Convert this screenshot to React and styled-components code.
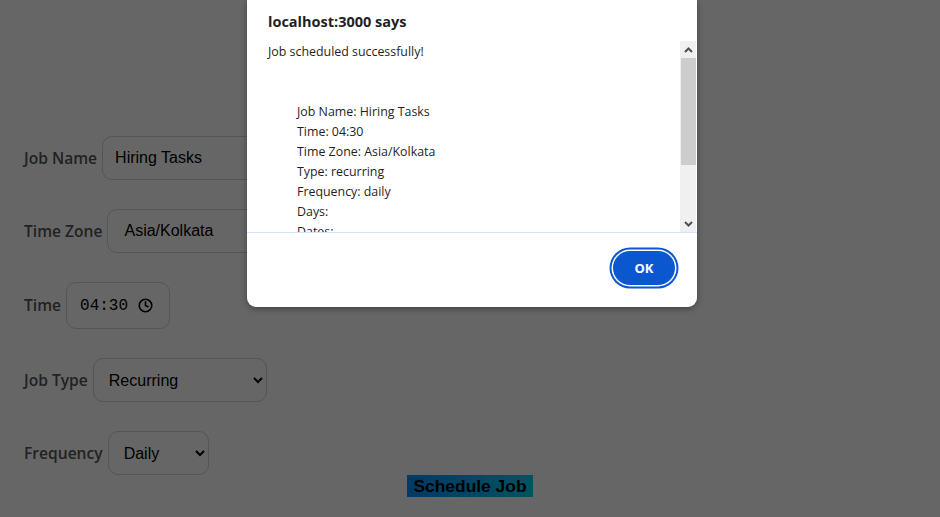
import React from "react";
import styled, { createGlobalStyle } from "styled-components";
import { Clock } from "lucide-react";

const GlobalStyle = createGlobalStyle`
  html, body {
    margin: 0;
    padding: 0;
    background: #fff;
    font-family: "Liberation Sans", Arial, sans-serif;
  }
`;

const Page = styled.div`
  min-height: 517px;
  position: relative;
  overflow: hidden;
`;

const Form = styled.form`
  display: flex;
  flex-direction: column;
  gap: 29px;
  padding: 136px 0 0 24px;
`;

const Row = styled.div`
  display: flex;
  align-items: center;
  gap: 5px;
`;

const Label = styled.label`
  font-family: "Open Sans", sans-serif;
  font-weight: 600;
  font-size: 15.6px;
  color: #555;
  margin-top: -1px;
`;

const TextInput = styled.input`
  box-sizing: border-box;
  width: 300px;
  height: 44px;
  padding: 0 ${(p) => p.$pad}px;
  border: 1px solid #d4d4d4;
  border-radius: 10px;
  font-family: "Liberation Sans", Arial, sans-serif;
  font-size: 16px;
  color: #000;
  background: #fff;
  outline: none;
`;

const TimeBox = styled.div`
  box-sizing: border-box;
  width: 104px;
  height: 47px;
  display: flex;
  align-items: center;
  gap: 10px;
  padding-left: 13px;
  border: 1px solid #d4d4d4;
  border-radius: 10px;
  font-family: "Liberation Mono", monospace;
  font-size: 16px;
  color: #000;
`;

const Select = styled.select`
  box-sizing: border-box;
  width: ${(p) => p.$w}px;
  height: 44px;
  padding: 0 4px 0 11px;
  border: 1px solid #d4d4d4;
  border-radius: 10px;
  font-family: "Liberation Sans", Arial, sans-serif;
  font-size: 16px;
  color: #000;
  background: #fff;
`;

const SubmitRow = styled.div`
  display: flex;
  justify-content: center;
  margin: -29px 0 0 -24px;
`;

const SubmitButton = styled.button`
  height: 22px;
  padding: 0 6px;
  border: none;
  background: linear-gradient(to right, #0090ff, #00d0f0);
  font-family: "Liberation Sans", Arial, sans-serif;
  font-weight: 700;
  font-size: 17.4px;
  color: #000;
`;

const Overlay = styled.div`
  position: absolute;
  inset: 0;
  background: rgba(0, 0, 0, 0.6);
`;

const Dialog = styled.div`
  position: absolute;
  top: 0;
  left: 247px;
  width: 450px;
  height: 307px;
  background: #fff;
  border-radius: 0 0 9px 9px;
  box-shadow: 0 2px 6px rgba(0, 0, 0, 0.35);
  display: flex;
  flex-direction: column;
  font-family: "Open Sans", "Noto Sans", sans-serif;
  color: #1f1f1f;
`;

const Title = styled.div`
  padding: 12px 0 0 21px;
  height: 29px;
  font-size: 14.5px;
  font-weight: 700;
`;

const MessageArea = styled.div`
  display: flex;
  height: 191px;
  border-bottom: 1px solid #d3e3fd;
`;

const MessageText = styled.div`
  flex: 1;
  overflow: hidden;
  padding: 1px 0 0 21px;
  font-size: 12.4px;
  line-height: 20px;
`;

const Line = styled.div`
  height: 20px;
  white-space: pre;
  padding-left: ${(p) => (p.$indent ? 29 : 0)}px;
`;

const ScrollTrack = styled.div`
  width: 16px;
  margin-right: 1px;
  background: #f0f0f0;
  display: flex;
  flex-direction: column;
  align-items: center;
`;

const ArrowBtn = styled.div`
  height: 17px;
  width: 16px;
  display: flex;
  align-items: center;
  justify-content: center;
`;

const Thumb = styled.div`
  width: 15px;
  height: 107px;
  background: #cdcdcd;
`;

const Spacer = styled.div`
  flex: 1;
`;

const Footer = styled.div`
  flex: 1;
  display: flex;
  justify-content: flex-end;
  align-items: flex-start;
  padding: 18px 22px 0 0;
`;

const OkButton = styled.button`
  width: 62px;
  height: 34px;
  border: none;
  border-radius: 17px;
  background: #0b57d0;
  box-shadow: 0 0 0 1.5px #fff, 0 0 0 3.5px #0b57d0;
  color: #fff;
  font-family: "Open Sans", "Noto Sans", sans-serif;
  font-weight: 700;
  font-size: 13px;
`;

const Chevron = ({ up }) => (
  <svg width="9" height="6" viewBox="0 0 9 6">
    <polyline
      points={up ? "1,5 4.5,1.5 8,5" : "1,1 4.5,4.5 8,1"}
      fill="none"
      stroke="#505050"
      strokeWidth="2"
    />
  </svg>
);

const lines = [
  { text: "Job scheduled successfully!" },
  { text: "" },
  { text: "" },
  { text: "Job Name: Hiring Tasks", indent: true },
  { text: "Time: 04:30", indent: true },
  { text: "Time Zone: Asia/Kolkata", indent: true },
  { text: "Type: recurring", indent: true },
  { text: "Frequency: daily", indent: true },
  { text: "Days:", indent: true },
  { text: "Dates:", indent: true },
];

export default function App() {
  return (
    <Page>
      <GlobalStyle />
      <Form onSubmit={(e) => e.preventDefault()}>
        <Row>
          <Label>Job Name</Label>
          <TextInput $pad={12} defaultValue="Hiring Tasks" />
        </Row>
        <Row>
          <Label>Time Zone</Label>
          <TextInput $pad={16} defaultValue="Asia/Kolkata" />
        </Row>
        <Row>
          <Label>Time</Label>
          <TimeBox>
            <span>04:30</span>
            <Clock size={15} strokeWidth={2.6} color="#000" />
          </TimeBox>
        </Row>
        <Row>
          <Label>Job Type</Label>
          <Select $w={174} defaultValue="recurring">
            <option value="once">One Time</option>
            <option value="recurring">Recurring</option>
          </Select>
        </Row>
        <Row>
          <Label>Frequency</Label>
          <Select $w={101} defaultValue="daily">
            <option value="daily">Daily</option>
            <option value="weekly">Weekly</option>
            <option value="monthly">Monthly</option>
          </Select>
        </Row>
        <SubmitRow>
          <SubmitButton type="submit">Schedule Job</SubmitButton>
        </SubmitRow>
      </Form>

      <Overlay />
      <Dialog>
        <Title>localhost:3000 says</Title>
        <MessageArea>
          <MessageText>
            {lines.map((l, i) => (
              <Line key={i} $indent={l.indent}>
                {l.text}
              </Line>
            ))}
          </MessageText>
          <ScrollTrack>
            <ArrowBtn>
              <Chevron up />
            </ArrowBtn>
            <Thumb />
            <Spacer />
            <ArrowBtn>
              <Chevron />
            </ArrowBtn>
          </ScrollTrack>
        </MessageArea>
        <Footer>
          <OkButton>OK</OkButton>
        </Footer>
      </Dialog>
    </Page>
  );
}
